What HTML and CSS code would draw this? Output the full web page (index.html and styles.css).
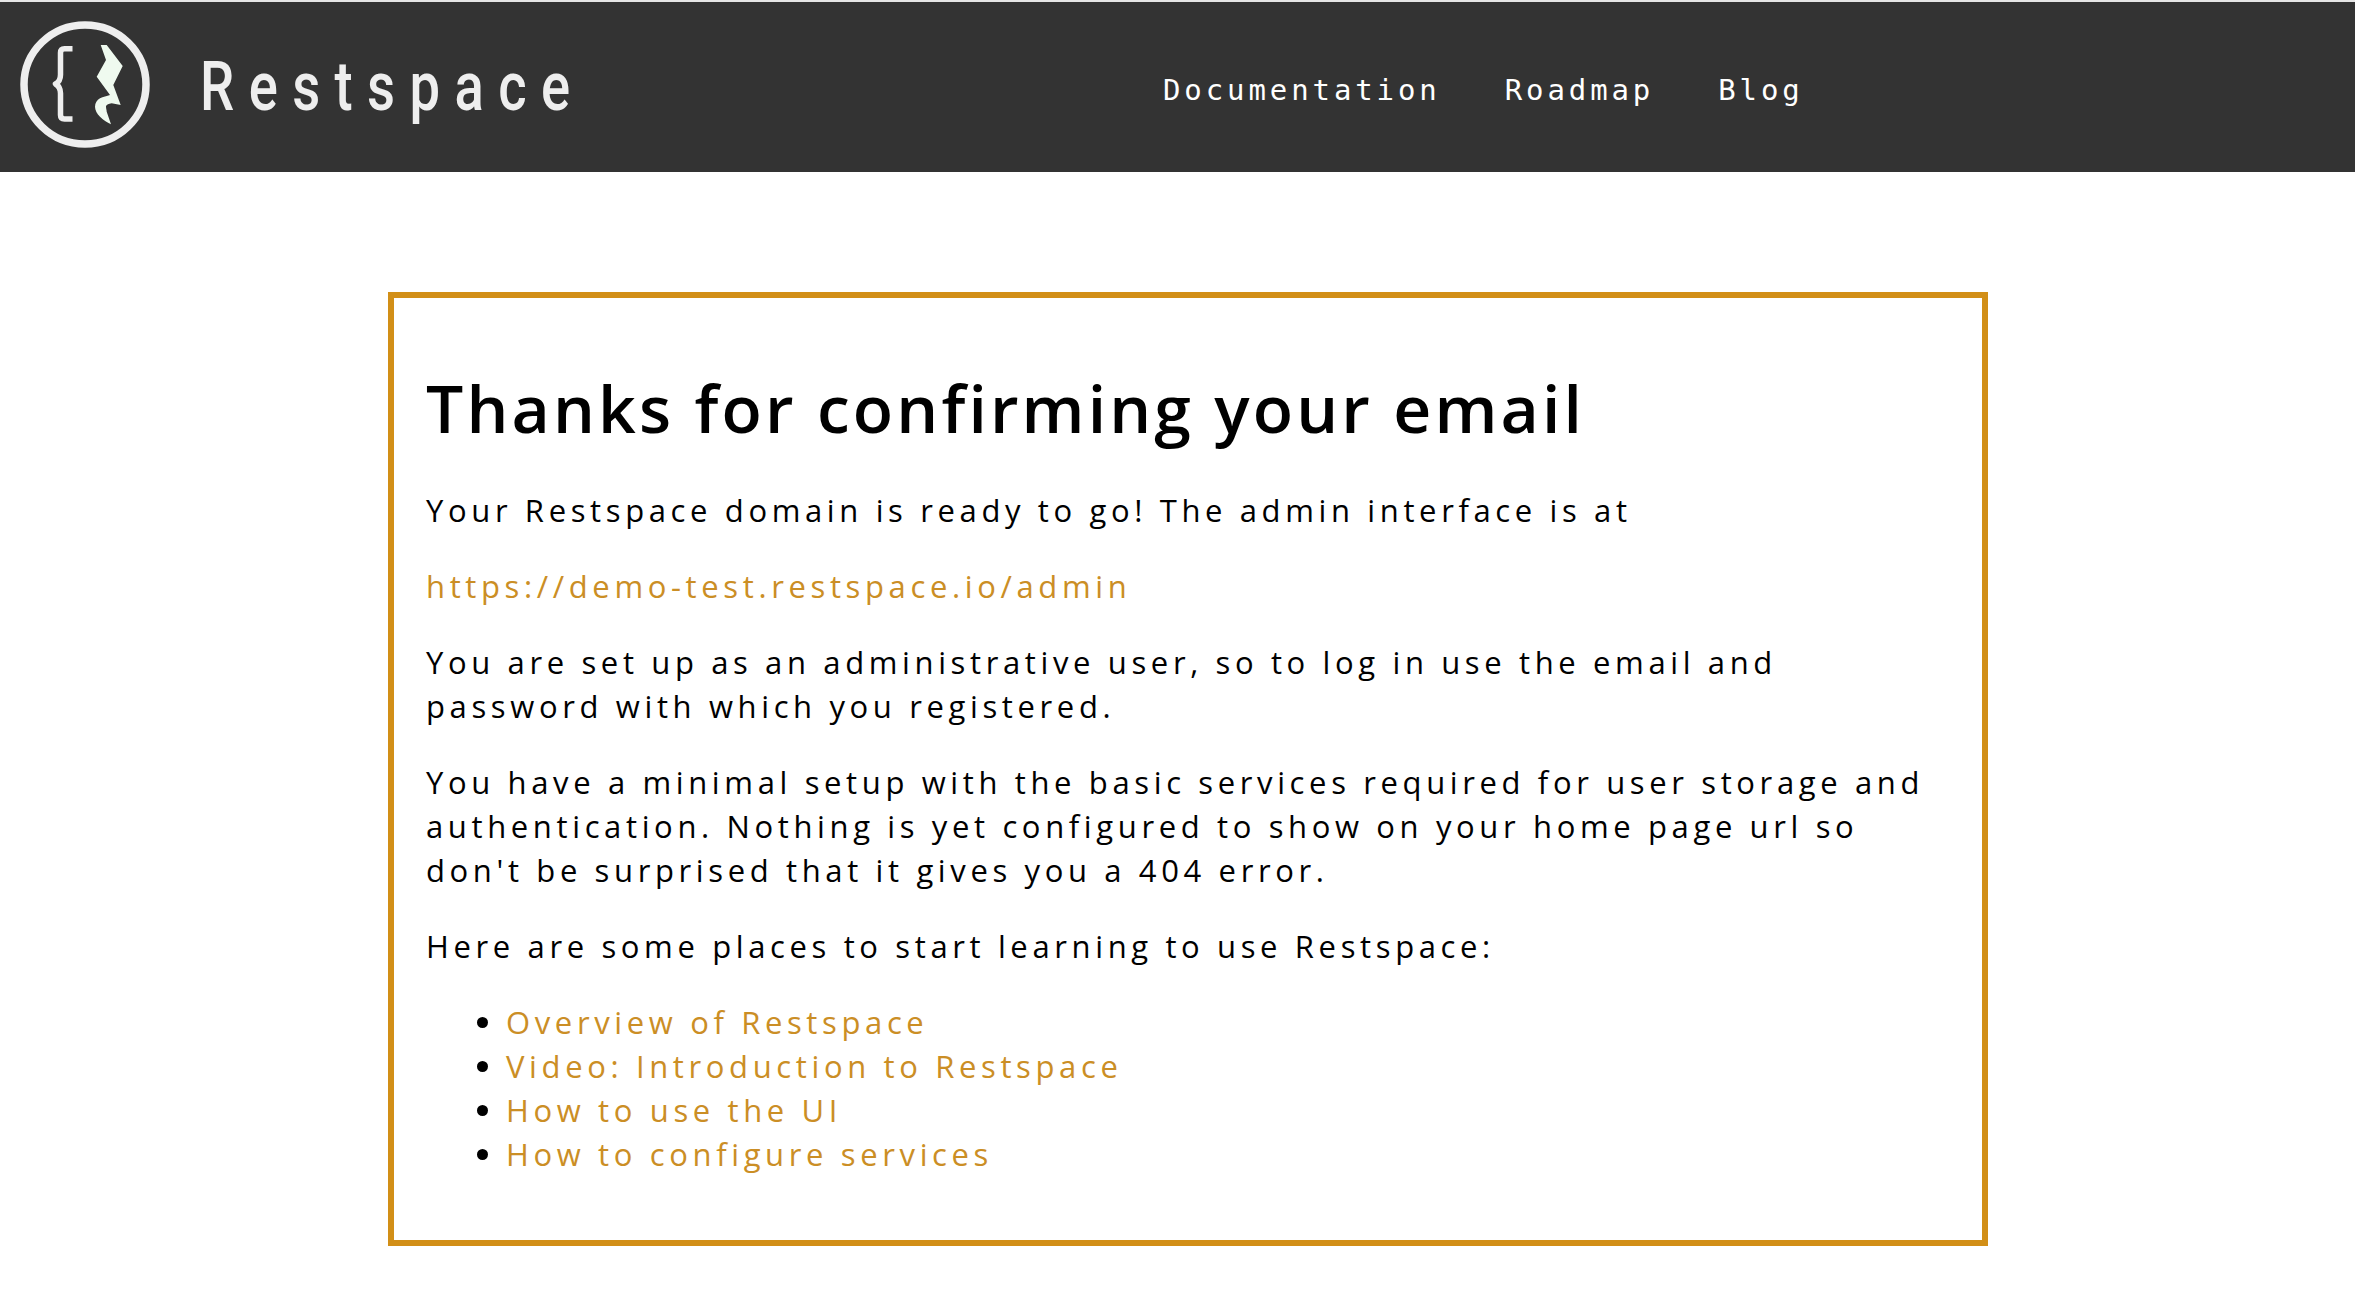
FILE: index.html
```html
<!DOCTYPE html>
<html lang="en">
<head>
<meta charset="utf-8">
<title>Restspace</title>
<link rel="stylesheet" href="styles.css">
</head>
<body>
<header class="topbar">
  <a class="brand" href="#">
    <svg class="logo" viewBox="0 0 130 127" aria-hidden="true">
      <ellipse class="logo-ring" cx="65" cy="63.5" rx="61" ry="59.5"/>
      <path class="logo-brace" d="M52.5 27.7h-8c-3 0-4 1.5-4 4v22c0 4-1 7-5 9.300 4 2.300 5 5.300 5 9.300v21.700c0 2.500 1 4 4 4h8"/>
      <path class="logo-wave" d="M80.700 24h6l16 21-9.400 19 7.400 20-9-1.700c-3 .5-5.700 1.500-5.700 3.400 0 2 .7 3 .7 5l4.300 12.600c-4-2-8-4.600-11-7.600-3-3-5-6.500-5-10 0-4 2-6.500 5-8.400 3-1.400 7-2.300 10-3.300L76.700 55.700 86 39z"/>
    </svg>
    <span class="brand-name">Restspace</span>
  </a>
  <nav class="nav">
    <a href="#">Documentation</a>
    <a href="#">Roadmap</a>
    <a href="#">Blog</a>
  </nav>
</header>
<main class="page">
  <section class="card">
    <h1>Thanks for confirming your email</h1>
    <p>Your Restspace domain is ready to go! The admin interface is at</p>
    <p><a href="#">https://demo-test.restspace.io/admin</a></p>
    <p>You are set up as an administrative user, so to log in use the email and password with which you registered.</p>
    <p>You have a minimal setup with the basic services required for user storage and authentication. Nothing is yet configured to show on your home page url so don't be surprised that it gives you a 404 error.</p>
    <p>Here are some places to start learning to use Restspace:</p>
    <ul>
      <li><a href="#">Overview of Restspace</a></li>
      <li><a href="#">Video: Introduction to Restspace</a></li>
      <li><a href="#">How to use the UI</a></li>
      <li><a href="#">How to configure services</a></li>
    </ul>
  </section>
</main>
</body>
</html>
```
FILE: styles.css
```css
* { box-sizing: border-box; }
html, body { margin: 0; padding: 0; background: #fff; }
body { font-family: "Open Sans", sans-serif; color: #000; }
a { text-decoration: none; color: inherit; }

.topbar {
  height: 172px;
  border-top: 2px solid #e6e6e6;
  background: #333;
  display: flex;
  align-items: center;
}
.brand {
  display: flex;
  align-items: center;
  align-self: flex-start;
  width: 1163px;
  padding: 19px 0 0 20px;
}
.logo { width: 130px; height: 127px; flex: none; }
.logo-ring { fill: none; stroke: #eee; stroke-width: 7.5; }
.logo-brace { fill: none; stroke: #eee; stroke-width: 5.5; stroke-linejoin: round; }
.logo-wave { fill: #effaef; }
.brand-name {
  margin-left: 50px;
  margin-top: 5px;
  font-family: "Roboto", sans-serif;
  font-size: 68px;
  font-weight: 500;
  color: #eee;
  letter-spacing: 18px;
  line-height: 1;
  transform: scaleX(0.8);
  transform-origin: left center;
}
.nav {
  display: flex;
  gap: 64px;
  font-family: "DejaVu Sans Mono", monospace;
  font-size: 29px;
  letter-spacing: 3.9px;
  color: #fff;
  margin-top: 6px;
}

.page { padding: 120px 367px 0 388px; }
.card {
  height: 954px;
  border: 6px solid #d28f17;
  padding: 64px 32px 0 32px;
  font-size: 31px;
  line-height: 44px;
  letter-spacing: 4.63px;
}
.card h1 {
  margin: 0 0 36px;
  font-size: 66px;
  line-height: 90px;
  font-weight: 600;
  letter-spacing: 3.15px;
}
.card p { margin: 0 0 32px; }
.card a { color: #cb8e25; }
.card ul { margin: 0; padding-left: 80px; }
```
